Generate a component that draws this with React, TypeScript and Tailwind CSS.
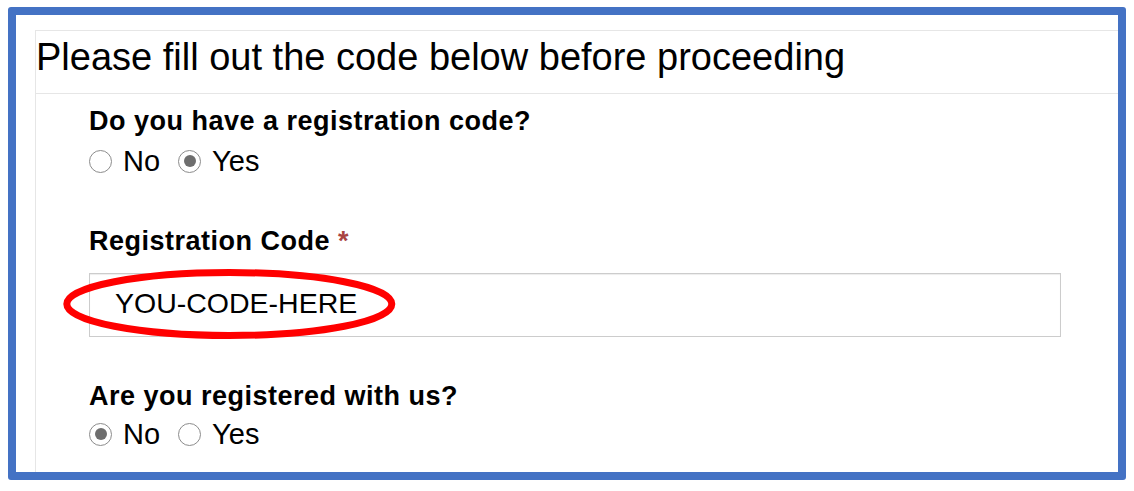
import React from "react";

const Radio = ({ checked, label }: { checked?: boolean; label: string }) => (
  <label className="flex items-center">
    <span className="flex h-[23px] w-[23px] items-center justify-center rounded-full border border-[#8c8c8c] bg-white">
      {checked && <span className="h-[12px] w-[12px] rounded-full bg-[#6e6e6e]" />}
    </span>
    <span className="ml-[11px] mr-[18px]">{label}</span>
  </label>
);

export default function App() {
  return (
    <div className="h-[491px] w-[1134px] bg-white pl-[8px] pt-[7px] text-black" style={{ fontFamily: '"Liberation Sans", Arial, sans-serif' }}>
      <div className="h-[473px] w-[1118px] overflow-hidden rounded-[3px] border-8 border-[#4472c4] pl-[19px] pt-[15px]">
        <div className="h-full w-[1120px] border-l border-t border-[#e6e6e6]">
          <div className="h-[63px] border-b border-[#e6e6e6] pt-[7px] text-[38px] leading-[38px]">
            Please fill out the code below before proceeding
          </div>
          <div className="pl-[53px] pt-[12px] text-[29px] leading-[30px]">
            <div className="text-[27px] font-bold tracking-[0.5px]">Do you have a registration code?</div>
            <div className="mt-[10px] flex">
              <Radio label="No" />
              <Radio checked label="Yes" />
            </div>

            <div className="mt-[50px] text-[27px] font-bold tracking-[0.5px]">
              Registration Code <span className="text-[#a94442]">*</span>
            </div>
            <div className="relative mt-[17px] h-[64px] w-[972px] border border-[#cccccc] pl-[25px] pt-[14px] text-[28.5px] shadow-[inset_0_1px_1px_rgba(0,0,0,0.075)]">
              YOU-CODE-HERE
              <svg className="absolute left-[-31px] top-[-8px]" width="340" height="80" viewBox="0 0 340 80">
                <ellipse cx="170.3" cy="38" rx="162.5" ry="31.5" fill="none" stroke="#ff0000" strokeWidth="7" />
              </svg>
            </div>

            <div className="mt-[44px] text-[27px] font-bold tracking-[0.5px]">Are you registered with us?</div>
            <div className="mt-[8px] flex">
              <Radio checked label="No" />
              <Radio label="Yes" />
            </div>
          </div>
        </div>
      </div>
    </div>
  );
}
